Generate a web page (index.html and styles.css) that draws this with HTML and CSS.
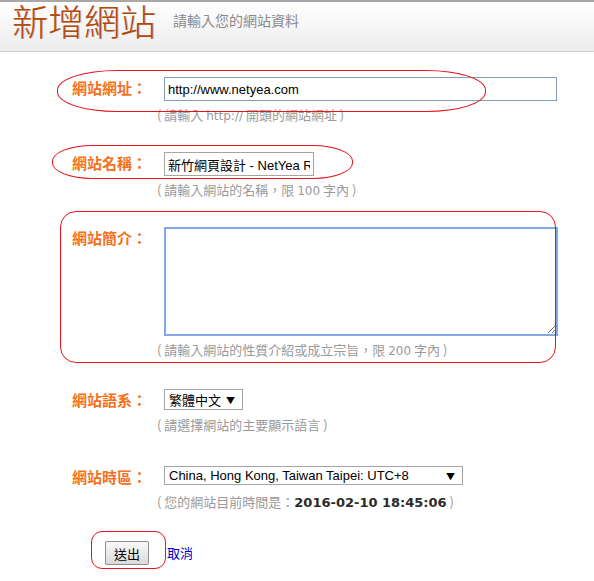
FILE: index.html
```html
<!DOCTYPE html>
<html lang="zh-Hant">
<head>
    <meta charset="UTF-8">
    <meta name="viewport" content="width=device-width, initial-scale=1.0">
    <title>新增網站</title>
    <link rel="stylesheet" href="styles.css">
</head>
<body>
    <div class="header">
        <h1>新增網站</h1>
        <span class="subtitle">請輸入您的網站資料</span>
    </div>

    <form class="site-form" onsubmit="return false;">
        <div class="row gap-a">
            <label for="siteUrl">網站網址：</label>
            <input type="text" id="siteUrl" class="field-url" value="http://www.netyea.com">
            <p class="hint">( 請輸入 <span class="latin">http://</span> 開頭的網站網址 )</p>
        </div>

        <div class="row gap-a">
            <label for="siteName">網站名稱：</label>
            <input type="text" id="siteName" class="field-name" value="新竹網頁設計 - NetYea RWD網頁設計">
            <p class="hint">( 請輸入網站的名稱，限 <span class="latin">100</span> 字內 )</p>
        </div>

        <div class="row gap-b">
            <label for="siteIntro">網站簡介：</label>
            <textarea id="siteIntro" class="field-intro"></textarea>
            <p class="hint">( 請輸入網站的性質介紹或成立宗旨，限 <span class="latin">200</span> 字內 )</p>
        </div>

        <div class="row gap-c">
            <label for="siteLang">網站語系：</label>
            <span class="select-wrap lang">
                <select id="siteLang">
                    <option>繁體中文</option>
                    <option>简体中文</option>
                    <option>English</option>
                </select>
            </span>
            <p class="hint">( 請選擇網站的主要顯示語言 )</p>
        </div>

        <div class="row gap-d">
            <label for="siteZone">網站時區：</label>
            <span class="select-wrap zone">
                <select id="siteZone">
                    <option>China, Hong Kong, Taiwan Taipei: UTC+8</option>
                </select>
            </span>
            <p class="hint">( 您的網站目前時間是：<strong class="clock">2016-02-10 18:45:06</strong> )</p>
        </div>

        <div class="actions">
            <button type="submit">送出</button>
            <a href="#" class="cancel">取消</a>
        </div>
    </form>

    <!-- red hand-drawn markers over the form -->
    <div class="mark mark-url"></div>
    <div class="mark mark-name"></div>
    <div class="mark mark-intro"></div>
    <div class="mark mark-submit"></div>
</body>
</html>
```

FILE: styles.css
```css
body {
    margin: 0;
    font-family: "Noto Sans CJK TC", "Liberation Sans", sans-serif;
    font-size: 13px;
    color: #333;
    background-color: white;
    position: relative;
    min-height: 581px;
}
.header {
    display: flex;
    align-items: flex-start;
    height: 49px;
    padding-left: 12px;
    border-top: 2px solid #a8a8a8;
    border-bottom: 1px solid #cfcfcf;
    background: linear-gradient(#ffffff, #ececec);
}
.header h1 {
    margin: 0;
    font-family: "Noto Sans CJK TC", serif;
    font-weight: 300;
    font-size: 36px;
    line-height: 34px;
    padding-top: 1px;
    color: #b24a06;
    text-shadow: 1px 0 0 rgba(120, 40, 90, 0.3);
}
.header .subtitle {
    margin: 9px 0 0 17px;
    font-size: 14px;
    line-height: 18px;
    color: #8a8a8a;
}
.site-form {
    padding: 25px 0 0 72px;
}
.row {
    display: grid;
    grid-template-columns: 92px auto;
    justify-content: start;
    align-items: start;
}
.gap-a {
    margin-bottom: 27px;
}
.gap-b {
    margin-bottom: 29px;
}
.gap-c {
    margin-bottom: 31px;
}
.gap-d {
    margin-bottom: 29px;
}
.row label {
    font-size: 15px;
    font-weight: bold;
    line-height: 22px;
    color: #f4711e;
}
.row input, .row textarea, .row select {
    display: block;
    box-sizing: border-box;
    font-family: "Liberation Sans", "Noto Sans CJK TC", sans-serif;
    font-size: 13px;
    color: black;
    margin: 0;
    background: white;
}
.field-url {
    width: 393px;
    height: 24px;
    padding: 0 3px;
    border: 1px solid #7f9db9;
}
.field-name {
    width: 150px;
    height: 24px;
    padding: 0 3px;
    border: 1px solid #a5a5a5;
    font-size: 14px;
}
.field-intro {
    width: 394px;
    height: 109px;
    border: 2px solid #84a8e4;
    resize: both;
    outline: none;
}
.hint {
    grid-column: 2;
    height: 20px;
    margin: 4px 0 0 -7px;
    line-height: 20px;
    font-size: 13px;
    color: #9a9a9a;
    white-space: nowrap;
}
.hint .latin {
    font-family: "DejaVu Sans", sans-serif;
    font-size: 12px;
    line-height: 1;
    color: #9a9a9a;
}
.clock {
    font-family: "DejaVu Sans", sans-serif;
    font-size: 13px;
    line-height: 1;
    color: #2b2b2b;
}
.select-wrap {
    position: relative;
    display: block;
}
.select-wrap select {
    appearance: none;
    -webkit-appearance: none;
    border: 1px solid #a5a5a5;
    border-radius: 0;
    padding: 0 4px;
    width: 100%;
}
.select-wrap::after {
    content: "\25BC";
    position: absolute;
    right: 8px;
    top: 50%;
    transform: translateY(-50%);
    font-size: 9px;
    line-height: 1;
    color: black;
    pointer-events: none;
}
.select-wrap.lang {
    width: 79px;
}
.select-wrap.lang select {
    height: 21px;
    padding-right: 20px;
    font-family: "Noto Sans CJK TC", sans-serif;
    font-size: 13px;
    line-height: 19px;
}
.select-wrap.zone {
    width: 299px;
}
.select-wrap.zone select {
    height: 19px;
    font-size: 13px;
    line-height: 17px;
}
.actions {
    display: flex;
    align-items: center;
    height: 24px;
    gap: 18px;
    padding-left: 33px;
}
.actions button {
    width: 44px;
    height: 24px;
    padding: 0;
    font-family: "Noto Sans CJK TC", sans-serif;
    font-size: 13px;
    color: black;
    border: 1px solid #8e8e8e;
    border-radius: 2px;
    background: linear-gradient(#fafafa, #dadada);
    cursor: pointer;
}
.cancel {
    font-size: 13px;
    line-height: 18px;
    color: #0000c8;
    text-decoration: none;
}
.mark {
    position: absolute;
    border: 1px solid #e8141c;
    pointer-events: none;
}
.mark-url {
    left: 57px;
    top: 70px;
    width: 427px;
    height: 40px;
    border-radius: 60px / 20px;
}
.mark-name {
    left: 52px;
    top: 145px;
    width: 299px;
    height: 32px;
    border-radius: 40px / 16px;
}
.mark-intro {
    left: 60px;
    top: 211px;
    width: 494px;
    height: 150px;
    border-radius: 16px;
}
.mark-submit {
    left: 91px;
    top: 531px;
    width: 73px;
    height: 36px;
    border-radius: 11px;
}
```
